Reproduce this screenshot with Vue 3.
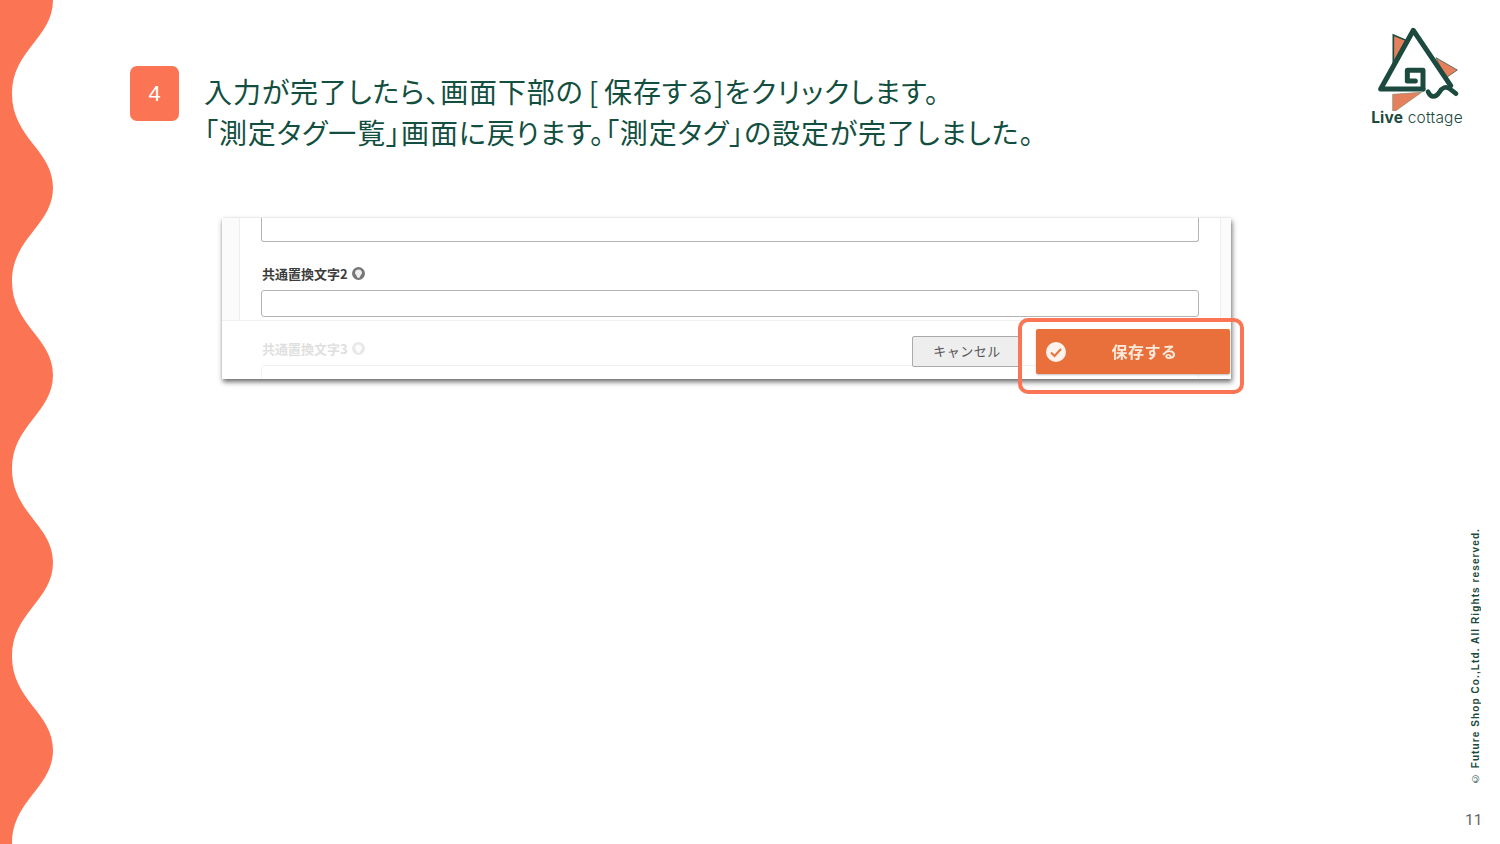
<template>
  <div class="slide">
    <svg class="wave" width="60" height="844" viewBox="0 0 60 844">
      <path :d="wavePath" fill="#fb7555" />
    </svg>

    <div class="top-row">
      <div class="step-badge">4</div>
      <div class="step-text">
        <p>入力が完了したら、画面下部の<span class="bracket-open">[</span>保存する]をクリックします。</p>
        <p>「測定タグ一覧」画面に戻ります。「測定タグ」の設定が完了しました。</p>
      </div>
      <div class="logo">
        <svg width="94" height="84" viewBox="60 36 282 252" fill="none">
          <path d="M130 60L168 76L130 150Z" fill="#e5805c" stroke="#1c4a3e" stroke-width="5" />
          <path d="M258 128L322 165L286 190Z" fill="#e5805c" stroke="#1c4a3e" stroke-width="2" />
          <path d="M128 238L215 232L128 294Z" fill="#e5805c" stroke="#8a8a70" stroke-width="2" />
          <path d="M219 222H92L190 46L302 212" stroke="#1c4a3e" stroke-width="15" stroke-linejoin="round" stroke-linecap="round" />
          <path d="M196 198H172V166H219V222" stroke="#1c4a3e" stroke-width="15" stroke-linejoin="round" stroke-linecap="round" />
          <path d="M234 230C242 250 258 248 268 232C276 218 288 212 300 222L318 236" stroke="#1c4a3e" stroke-width="14" stroke-linecap="round" />
        </svg>
        <div class="logo-name"><b>Live</b> cottage</div>
      </div>
    </div>

    <div class="shot-wrap">
      <div class="shot">
        <div class="shot-body">
          <div class="old-input"></div>
          <div class="field-label">共通置換文字2
            <svg class="hint" width="13" height="13" viewBox="0 0 13 13">
              <circle cx="6.5" cy="6.5" r="6.5" fill="#777" />
              <path d="M6.5 2.6C8.6 2.6 10 4 10 5.8C10 7.6 8 8.4 7.6 10.8H5.4C5 8.4 3 7.6 3 5.8C3 4 4.4 2.6 6.5 2.6Z" fill="#eee" />
            </svg>
          </div>
          <div class="text-input"></div>
        </div>
        <div class="shot-footer">
          <div class="faded">
            <div class="field-label">共通置換文字3
              <svg class="hint" width="13" height="13" viewBox="0 0 13 13">
                <circle cx="6.5" cy="6.5" r="6.5" fill="#777" />
                <path d="M6.5 2.6C8.6 2.6 10 4 10 5.8C10 7.6 8 8.4 7.6 10.8H5.4C5 8.4 3 7.6 3 5.8C3 4 4.4 2.6 6.5 2.6Z" fill="#eee" />
              </svg>
            </div>
            <div class="text-input"></div>
          </div>
          <button class="btn-cancel">キャンセル</button>
          <button class="btn-save">
            <svg width="22" height="22" viewBox="0 0 22 22">
              <circle cx="11" cy="11" r="10" fill="#fdf3ec" />
              <path d="M6 11.5L9.5 15L16 8" fill="none" stroke="#e9703a" stroke-width="2" />
            </svg>
            <span>保存する</span>
          </button>
        </div>
      </div>
      <div class="highlight"></div>
    </div>

    <div class="copyright"><span class="copy-mark">©</span> Future Shop Co.,Ltd. All Rights reserved.</div>
    <div class="page-no">11</div>
  </div>
</template>

<script setup>
// side wave: crest at x=53, trough at x=12, 187.5px period
const period = 187.5
let d = 'M0 0H53'
for (let i = 0; i < 5; i++) {
  const y = i * period
  d += ` C53 ${y + 38} 12 ${y + 50} 12 ${y + period / 2}`
  d += ` C12 ${y + 138} 53 ${y + 150} 53 ${y + period}`
}
const wavePath = d + ' V844 H0 Z'
</script>

<style>
html,
body {
  margin: 0;
  background: #fff;
}
</style>

<style scoped>
.slide {
  position: relative;
  width: 1500px;
  height: 844px;
  box-sizing: border-box;
  padding: 27px 36px 0 130px;
  background: #fff;
  overflow: hidden;
  font-family: "Noto Sans CJK JP", "Noto Sans", sans-serif;
}

.wave {
  position: absolute;
  left: 0;
  top: 0;
}

.top-row {
  display: flex;
  align-items: flex-start;
  height: 127px;
}

.step-badge {
  width: 49px;
  height: 55px;
  margin-top: 39px;
  border-radius: 7px;
  background: #fb7555;
  color: #fff;
  font: 22px/55px "Liberation Sans", sans-serif;
  text-align: center;
  flex-shrink: 0;
}

.step-text {
  flex: 1;
  margin: 44px 0 0 25px;
  color: #134f40;
  font-size: 28px;
  line-height: 41px;
  letter-spacing: 0.9px;
  font-feature-settings: "palt";
}

.step-text p {
  margin: 0;
  white-space: nowrap;
}

.bracket-open {
  margin: 0 5px;
}

.logo {
  display: flex;
  flex-direction: column;
  align-items: center;
  width: 94px;
  flex-shrink: 0;
}

.logo-name {
  margin-top: -2px;
  color: #1c4a3e;
  font: 300 15.5px/18px Inter, sans-serif;
  letter-spacing: 0.2px;
  white-space: nowrap;
}

.logo-name b {
  font-weight: 700;
}

.shot-wrap {
  position: relative;
  width: 1009px;
  height: 161px;
  margin: 64px 0 0 92px;
}

.shot {
  position: relative;
  height: 100%;
  background: #fbfbfb;
  box-shadow: 1px 3px 5px rgba(60, 60, 60, 0.75), 0 0 2px rgba(0, 0, 0, 0.1);
  overflow: hidden;
  filter: blur(0.4px);
}

.shot-body {
  height: 100%;
  margin: 0 10px 0 17px;
  padding: 0 21px;
  background: #fff;
  border-left: 1px solid #eee;
  border-right: 1px solid #eee;
}

.old-input {
  height: 23px;
  border: 1px solid #b4b4b4;
  border-top: none;
  border-radius: 0 0 3px 3px;
}

.field-label {
  display: flex;
  align-items: center;
  gap: 4px;
  height: 22px;
  margin-top: 20px;
  padding-left: 1px;
  color: #3c3c3c;
  font-size: 13px;
  font-weight: 700;
}

.text-input {
  height: 25px;
  margin-top: 6px;
  border: 1px solid #b4b4b4;
  border-radius: 3px;
  background: #fff;
}

.shot-footer {
  position: absolute;
  left: 0;
  right: 0;
  top: 102px;
  bottom: 0;
  background: #fff;
  border-top: 1px solid #f0f0f0;
}

.faded {
  position: absolute;
  left: 39px;
  right: 32px;
  top: 0;
  opacity: 0.16;
}

.faded .field-label {
  margin-top: 16px;
}

.btn-cancel {
  position: absolute;
  left: 690px;
  top: 15px;
  width: 110px;
  height: 31px;
  padding: 0 0 3px;
  border: 1px solid #aaa;
  border-radius: 2px;
  background: #eee;
  color: #555;
  font: 13px "Noto Sans CJK JP", sans-serif;
  letter-spacing: 0.5px;
  text-align: center;
}

.btn-save {
  position: absolute;
  left: 814px;
  top: 8px;
  width: 194px;
  height: 45px;
  display: flex;
  align-items: center;
  padding: 0 0 0 9px;
  border: none;
  border-radius: 2px;
  background: #e9703a;
  box-shadow: 0 1px 2px rgba(0, 0, 0, 0.25);
  color: #fdeadd;
  font: 700 16px "Noto Sans CJK JP", sans-serif;
}

.btn-save span {
  flex: 1;
  padding: 0 8px 2px 0;
  letter-spacing: 0.5px;
  text-align: center;
}

.highlight {
  position: absolute;
  left: 796px;
  top: 100px;
  width: 226px;
  height: 76px;
  box-sizing: border-box;
  border: 4px solid #fb7555;
  border-radius: 10px;
}

.copyright {
  position: absolute;
  left: 1470px;
  bottom: 60px;
  writing-mode: vertical-rl;
  transform: rotate(180deg);
  color: #1c4a3e;
  font: 700 10px/12px "Liberation Sans", sans-serif;
  letter-spacing: 1.1px;
  white-space: nowrap;
}

.copy-mark {
  font-weight: 400;
}

.page-no {
  position: absolute;
  left: 1465px;
  top: 811px;
  color: #666;
  font: 15.5px/18px Roboto, sans-serif;
}
</style>
